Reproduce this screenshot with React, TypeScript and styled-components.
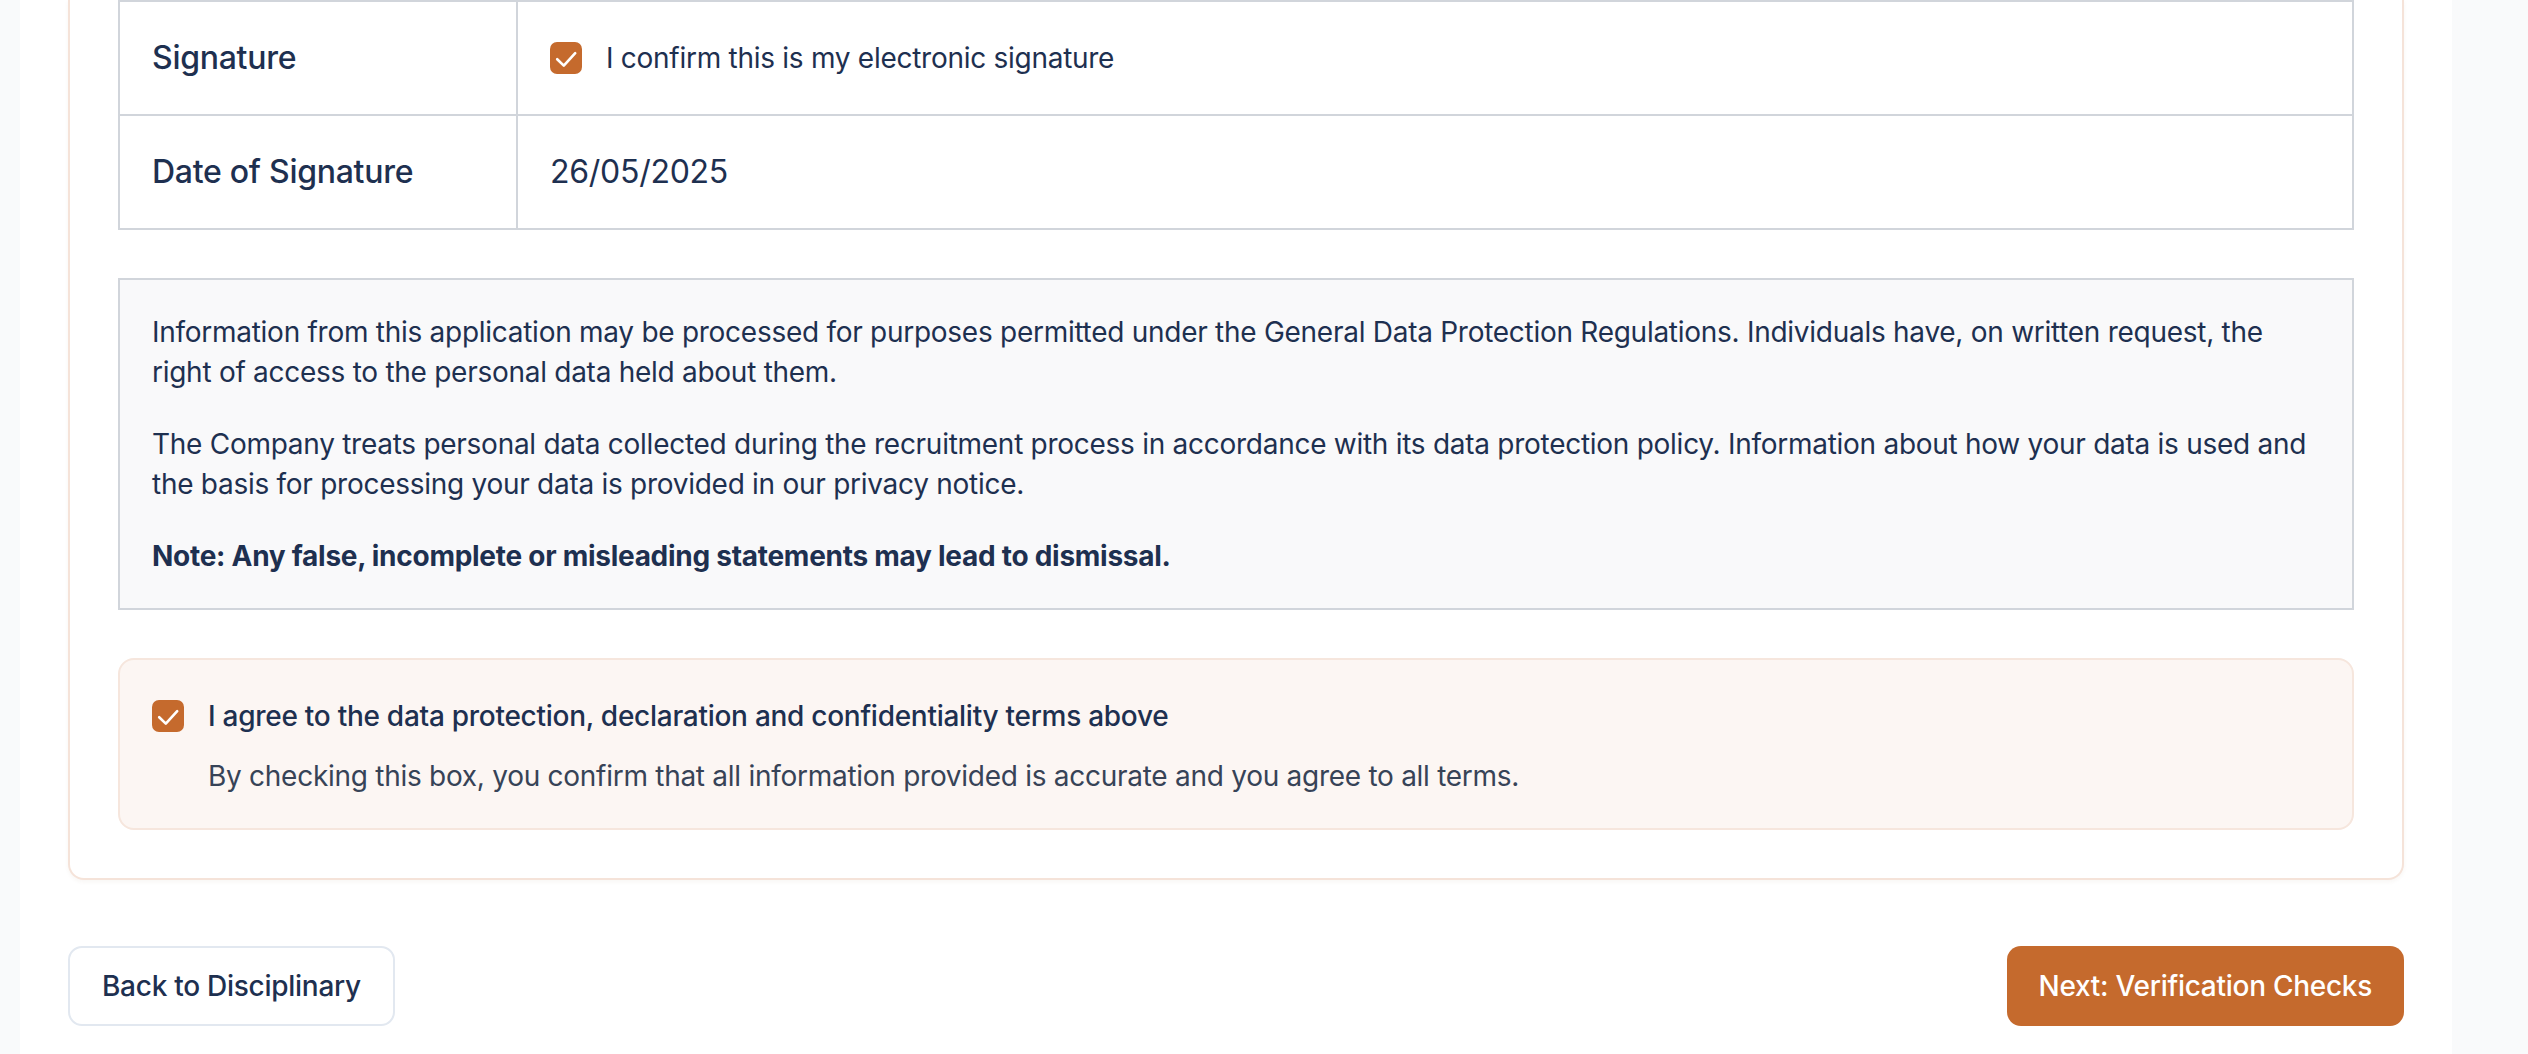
import styled, { createGlobalStyle } from "styled-components";

const GlobalStyle = createGlobalStyle`
    html, body {
        margin: 0;
        padding: 0;
        background: #f9fafb;
    }
    body {
        font-family: Inter, "Noto Sans", "Liberation Sans", sans-serif;
        color: #1e3050;
        letter-spacing: -0.017em;
        -webkit-font-smoothing: antialiased;
    }
    * {
        box-sizing: border-box;
    }
`;

const Main = styled.main`
    margin: 0 76px 0 20px;
    padding: 0 48px 32px;
    background: #ffffff;
    min-height: 100vh;
`;

const Card = styled.section`
    background: #ffffff;
    border: 2px solid #f5e3d9;
    border-top: none;
    border-radius: 0 0 16px 16px;
    padding: 0 48px 48px;
    box-shadow: 0 2px 4px rgba(120, 70, 40, 0.05);
`;

const SigTable = styled.div`
    border: 2px solid #d1d5db;
`;

const SigRow = styled.div`
    display: grid;
    grid-template-columns: 398px 1fr;
    & + & {
        border-top: 2px solid #d1d5db;
    }
`;

const LabelCell = styled.div`
    padding: 32px;
    border-right: 2px solid #d1d5db;
    font-size: 32px;
    line-height: 48px;
    font-weight: 500;
`;

const ValueCell = styled.div`
    padding: 32px;
    display: flex;
    align-items: center;
    gap: 24px;
    min-height: 112px;
    font-size: 32px;
    line-height: 48px;
`;

const SmallText = styled.span`
    font-size: 28px;
    line-height: 40px;
`;

const Box = styled.span<{ $offset?: number }>`
    flex: none;
    width: 32px;
    height: 32px;
    border-radius: 7px;
    background: #c56a2d;
    display: flex;
    align-items: center;
    justify-content: center;
    margin-top: ${(p) => p.$offset || 0}px;
`;

const InfoBox = styled.div`
    margin-top: 48px;
    background: #f9f9fa;
    border: 2px solid #d1d5db;
    padding: 32px;
    display: flex;
    flex-direction: column;
    gap: 32px;

    p {
        margin: 0;
        font-size: 28px;
        line-height: 40px;
    }
    strong {
        font-weight: 700;
    }
`;

const AgreeBox = styled.div`
    margin-top: 48px;
    background: #fcf6f3;
    border: 2px solid #f6e6dd;
    border-radius: 16px;
    padding: 32px;
    display: flex;
    align-items: flex-start;
    gap: 24px;
`;

const AgreeTitle = styled.div`
    font-size: 28px;
    line-height: 48px;
    font-weight: 500;
`;

const AgreeDesc = styled.div`
    margin-top: 16px;
    font-size: 28px;
    line-height: 40px;
    color: #374357;
`;

const Footer = styled.div`
    margin-top: 66px;
    display: flex;
    justify-content: space-between;
    align-items: center;
`;

const Button = styled.button<{ $primary?: boolean }>`
    height: 80px;
    padding: 0 32px;
    border-radius: 14px;
    font-family: inherit;
    letter-spacing: inherit;
    font-size: 28px;
    line-height: 40px;
    font-weight: 500;
    cursor: pointer;
    border: ${(p) => (p.$primary ? "none" : "2px solid #e2e8f0")};
    background: ${(p) => (p.$primary ? "#c56a2d" : "#ffffff")};
    color: ${(p) => (p.$primary ? "#ffffff" : "#1e3050")};
`;

function Check({ offset }: { offset?: number }) {
    return (
        <Box $offset={offset}>
            <svg width="32" height="32" viewBox="0 0 16 16" fill="none">
                <path
                    d="M3.6 8.6 L6.9 11.8 L12.6 5.6"
                    stroke="#ffffff"
                    strokeWidth="1.3"
                    strokeLinecap="round"
                    strokeLinejoin="round"
                />
            </svg>
        </Box>
    );
}

export default function App() {
    return (
        <>
            <GlobalStyle />
            <Main>
                <Card>
                    <SigTable>
                        <SigRow>
                            <LabelCell>Signature</LabelCell>
                            <ValueCell>
                                <Check />
                                <SmallText>I confirm this is my electronic signature</SmallText>
                            </ValueCell>
                        </SigRow>
                        <SigRow>
                            <LabelCell>Date of Signature</LabelCell>
                            <ValueCell>26/05/2025</ValueCell>
                        </SigRow>
                    </SigTable>

                    <InfoBox>
                        <p>
                            Information from this application may be processed for purposes permitted under the
                            General Data Protection Regulations. Individuals have, on written request, the right of
                            access to the personal data held about them.
                        </p>
                        <p>
                            The Company treats personal data collected during the recruitment process in accordance
                            with its data protection policy. Information about how your data is used and the basis
                            for processing your data is provided in our privacy notice.
                        </p>
                        <p>
                            <strong>Note: Any false, incomplete or misleading statements may lead to dismissal.</strong>
                        </p>
                    </InfoBox>

                    <AgreeBox>
                        <Check offset={8} />
                        <div>
                            <AgreeTitle>I agree to the data protection, declaration and confidentiality terms above</AgreeTitle>
                            <AgreeDesc>
                                By checking this box, you confirm that all information provided is accurate and you
                                agree to all terms.
                            </AgreeDesc>
                        </div>
                    </AgreeBox>
                </Card>

                <Footer>
                    <Button>Back to Disciplinary</Button>
                    <Button $primary>Next: Verification Checks</Button>
                </Footer>
            </Main>
        </>
    );
}
